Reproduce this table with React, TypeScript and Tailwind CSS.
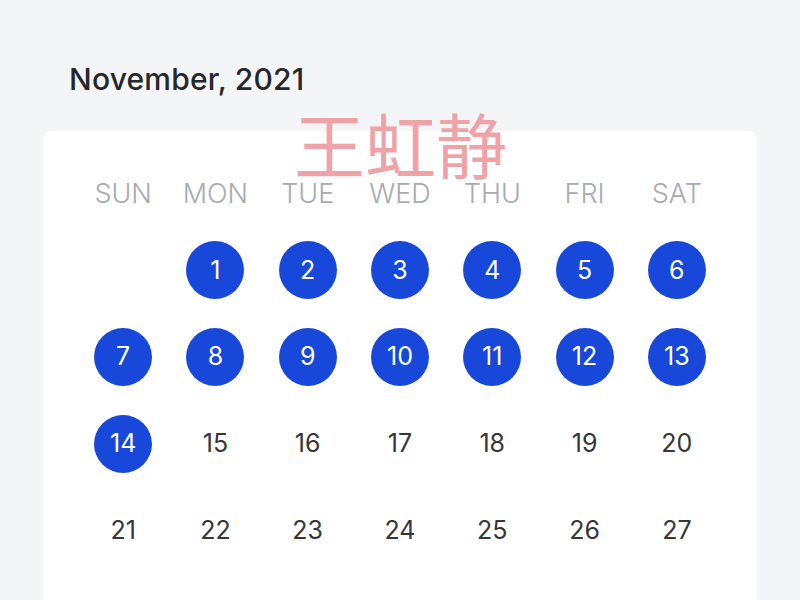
const days = ["SUN", "MON", "TUE", "WED", "THU", "FRI", "SAT"];

// november 2021 starts on a monday; days up to 14 are marked
const cells: (number | null)[] = [null, ...Array.from({ length: 27 }, (_, i) => i + 1)];
const marked = 14;

export default function App() {
  const rows: (number | null)[][] = [];
  for (let i = 0; i < cells.length; i += 7) rows.push(cells.slice(i, i + 7));

  return (
    <div className="relative h-[600px] overflow-hidden bg-[#f4f5f7] font-['Inter','Noto_Sans',sans-serif]">
      {/* Month title */}
      <h1 className="pl-[69px] pt-[62px] text-[30px] font-medium leading-[34px] tracking-[0.2px] text-[#25272b]">
        November, 2021
      </h1>

      {/* Calendar card */}
      <div className="mx-[43px] mt-[35px] h-[520px] rounded-lg bg-white px-[34px] pt-[42px]">
        <div className="grid h-10 grid-cols-7 items-center">
          {days.map((d) => (
            <div key={d} className="text-center text-[27px] font-light leading-none text-[#a6abb3]">
              {d}
            </div>
          ))}
        </div>

        <div className="mt-[14px]">
          {rows.map((row, r) => (
            <div key={r} className="grid h-[86.7px] grid-cols-7 items-center">
              {row.map((n, c) => (
                <div key={c} className="flex justify-center">
                  {n === null ? null : n <= marked ? (
                    <div className="flex h-[58px] w-[58px] items-center justify-center rounded-full bg-[#1848da] text-[25px] text-white">
                      {n}
                    </div>
                  ) : (
                    <div className="flex h-[58px] items-center text-[25px] text-[#34363a]">{n}</div>
                  )}
                </div>
              ))}
            </div>
          ))}
        </div>
      </div>

      {/* Watermark */}
      <div className="pointer-events-none absolute left-[294px] top-[107px] font-['Noto_Sans_CJK_SC',sans-serif] text-[71px] leading-none text-[#f0a3a6]">
        王虹静
      </div>
    </div>
  );
}
